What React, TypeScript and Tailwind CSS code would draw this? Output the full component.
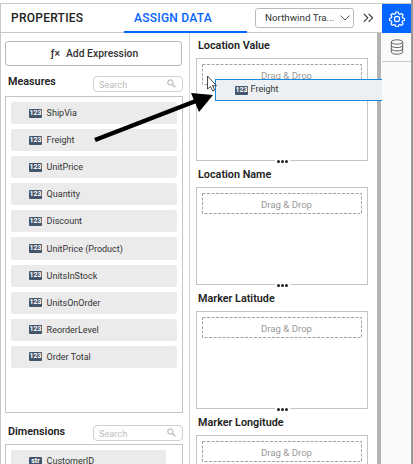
import React from "react";

function Badge({ text = "123" }: { text?: string }) {
  return (
    <span className="flex h-[9px] w-[13px] shrink-0 items-center justify-center rounded-[1px] bg-[#44566c] text-[7px] font-bold leading-none text-white">
      {text}
    </span>
  );
}

function Field({ label, badge, short }: { label: string; badge?: string; short?: boolean }) {
  return (
    <div className={`flex h-[22.1px] shrink-0 items-center gap-[4.6px] rounded-[2px] bg-[#ebebeb] pl-[18px] text-[9px] text-[#333] ${short ? "w-[155px]" : "w-[166px]"}`}>
      <Badge text={badge} />
      <span className="pt-px leading-[11px]">{label}</span>
    </div>
  );
}

function Search() {
  return (
    <div className="flex h-[16px] w-[90px] items-center justify-between rounded-[4px] border border-[#d0d0d0] pl-[5px] pr-[6px] text-[9.2px] text-[#bdbdbd]">
      <span className="pt-[2px]">Search</span>
      <svg width="9" height="9" viewBox="0 0 9 9" fill="none" stroke="#bdbdbd">
        <circle cx="3.4" cy="3.4" r="2.6" strokeWidth="1.2" />
        <path d="M5.4 5.4 8.3 8.3" strokeWidth="1.6" />
      </svg>
    </div>
  );
}

function Section({ title, box, first }: { title: string; box: string; first?: boolean }) {
  return (
    <section className="shrink-0">
      <h2 className={`flex items-center pl-[2px] pt-[2px] text-[10.8px] font-semibold text-[#222] ${first ? "h-[25px]" : "h-[26px]"}`}>{title}</h2>
      <div className={`relative w-[172px] border border-[#c4c4c4] p-[5px] ${box}`}>
        <div className="relative flex h-[21px] w-[160px] items-center justify-center pl-[9px] pt-[3px] text-[9.6px] text-[#999]">
          <svg className="absolute left-0 top-0" width="160" height="21" fill="none">
            <rect x=".5" y=".5" width="159" height="20" stroke="#a3a3a3" strokeDasharray="3 1.5" />
          </svg>
          <span>Drag &amp; Drop</span>
        </div>
        <div className="absolute -bottom-[4px] left-[78px] flex h-[5px] w-[15px] items-center justify-center gap-[1px] bg-white">
          <i className="size-[3px] rounded-full bg-[#222]" />
          <i className="size-[3px] rounded-full bg-[#222]" />
          <i className="size-[3px] rounded-full bg-[#222]" />
        </div>
      </div>
    </section>
  );
}

const measures = ["ShipVia", "Freight", "UnitPrice", "Quantity", "Discount", "UnitPrice (Product)", "UnitsInStock", "UnitsOnOrder", "ReorderLevel", "Order Total"];

export default function App() {
  return (
    <div className="relative flex h-[464px] w-[413px] overflow-hidden bg-white pt-[3px] font-['Roboto',sans-serif]">
      <main className="flex w-[382px] shrink-0 flex-col border-l border-t border-[#c8c8c8]">
        <header className="flex h-[29px] shrink-0 border-b border-[#c8c8c8] text-[12px] font-medium tracking-[.25px]">
          <div className="flex w-[123px] items-center pb-[1px] pl-[10px] text-[#222]">PROPERTIES</div>
          <div className="-mb-px flex w-[123px] items-center border-b-2 border-[#0565ff] pl-[10px] text-[#0565ff]">ASSIGN DATA</div>
          <div className="ml-[8px] mt-[4px] flex h-[20px] w-[99px] items-center justify-between rounded-[3px] border border-[#bbb] pl-[9px] pr-[3px] text-[9.8px] font-normal tracking-normal text-[#333]">
            <span>Northwind Tra...</span>
            <svg width="10" height="6" viewBox="0 0 10 6" fill="none" stroke="#555"><path d="m.5.5 4.5 4.5 4.5-4.5" /></svg>
          </div>
          <svg className="ml-[9px] mt-[9px]" width="11" height="10" viewBox="0 0 11 10" fill="none" stroke="#333" strokeWidth="1.1"><path d="m.8.8 4 4-4 4M5.6.8l4 4-4 4" /></svg>
        </header>
        <div className="flex min-h-0 flex-1">
          <aside className="flex w-[189px] shrink-0 flex-col border-r border-[#d5d5d5] pl-[4px] pt-[8px]">
            <button className="flex h-[25px] w-[177px] shrink-0 items-center justify-center gap-[6px] rounded-[3px] border border-[#b8b8b8] pl-[2px] text-[10.4px] font-medium text-[#333]">
              <span>ƒ×</span><span>Add Expression</span>
            </button>
            <div className="flex h-[30px] w-[178px] shrink-0 items-center justify-between pl-[3px] pt-[5px] text-[10.8px] font-semibold text-[#222]">
              <span className="-mt-[2px]">Measures</span><div className="font-normal"><Search /></div>
            </div>
            <div className="flex h-[317px] w-[178px] shrink-0 flex-col gap-[5px] border border-[#c4c4c4] pl-[5px] pt-[5px]">
              {measures.map((m) => <Field key={m} label={m} />)}
            </div>
            <div className="flex h-[31px] w-[178px] shrink-0 items-center justify-between pl-[3px] pt-[8px] text-[10.8px] font-semibold text-[#222]">
              <span className="-mt-px">Dimensions</span><div className="font-normal"><Search /></div>
            </div>
            <div className="h-[60px] w-[178px] shrink-0 border border-[#c4c4c4] pl-[5px] pt-[5px]"><Field label="CustomerID" badge="str" short /></div>
          </aside>
          <div className="flex w-[187px] shrink-0 flex-col overflow-hidden pl-[6px]">
            <Section title="Location Value" box="h-[103px]" first />
            <Section title="Location Name" box="h-[98px]" />
            <Section title="Marker Latitude" box="h-[98px]" />
            <Section title="Marker Longitude" box="h-[98px]" />
          </div>
          <div className="w-[4px] bg-[#b3b3b3]" />
        </div>
      </main>
      <nav className="flex w-[29px] shrink-0 flex-col border-t border-[#c8c8c8] bg-[#fafafa]">
        <div className="flex h-[29px] items-center justify-center bg-[#0565ff]">
          <svg width="16" height="16" viewBox="0 0 16 16" fill="none" stroke="white" strokeWidth="1.2" strokeLinejoin="round">
            <path d="m6.8 1h2.4l.4 1.8 1.4.6 1.5-1 1.6 1.6-1 1.6.6 1.3 1.8.4v2.2l-1.8.4-.6 1.5 1 1.4-1.6 1.7-1.5-1-1.4.6-.4 1.8H6.800l-.4-1.800-1.400-.6-1.500 1-1.600-1.700 1-1.400-.6-1.500L.5 9.500V7.300l1.800-.4.6-1.300-1-1.600L3.500 2.400l1.500 1 1.400-.6z" />
            <circle cx="8" cy="8" r="2.6" />
          </svg>
        </div>
        <div className="flex h-[29px] items-center justify-center border-b border-[#ccc]">
          <svg width="14" height="16" viewBox="0 0 14 16" fill="none" stroke="#555" strokeWidth=".9"><ellipse cx="7" cy="3" rx="5.7" ry="2.2" /><path d="M1.300 3v10c0 1.200 2.600 2.200 5.700 2.200s5.700-1 5.700-2.200V3M1.300 6.400c0 1.200 2.600 2.200 5.700 2.200s5.700-1 5.700-2.200M1.300 9.700c0 1.200 2.600 2.200 5.700 2.200s5.700-1 5.700-2.200" /></svg>
        </div>
      </nav>
      <div className="-mt-[3px] w-[2px] bg-[#999]" />
      <div className="absolute left-[215px] top-[79px] flex h-[22px] w-[167px] items-center gap-[2.6px] border border-r-0 border-[#198ae0] bg-[#edf0f3] pl-[19px] text-[9px] text-[#333]"><Badge /><span>Freight</span></div>
      <svg className="pointer-events-none absolute left-0 top-0" width="413" height="464">
        <path d="M95 140 201 99" stroke="black" strokeWidth="4.5" />
        <path d="m213 95-22-2 8 19z" />
        <path d="M207.500 76v13l3-2.500 2.200 4.500 2-1-2.200-4.300h4z" fill="white" stroke="#333" strokeWidth=".9" />
      </svg>
    </div>
  );
}
